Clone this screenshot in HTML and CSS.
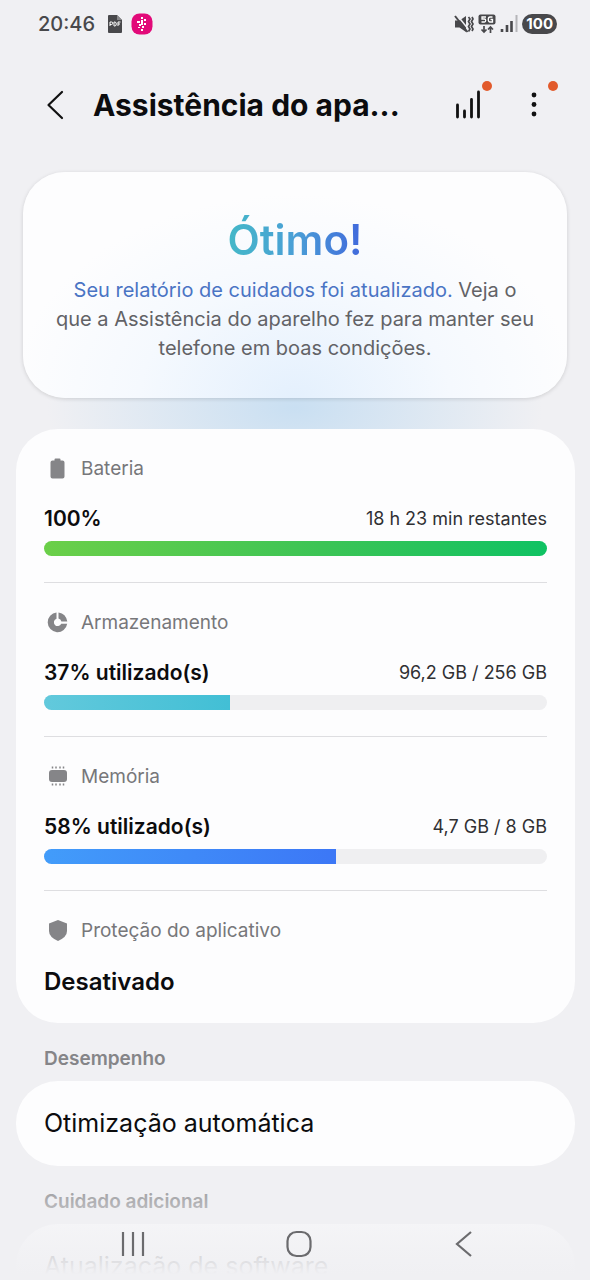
FILE: index.html
```html
<!DOCTYPE html>
<html lang="pt-BR">
<head>
<meta charset="utf-8">
<meta name="viewport" content="width=device-width, initial-scale=1">
<title>Assistência do aparelho</title>
<link rel="stylesheet" href="styles.css">
</head>
<body>
<div class="app">
  <div class="status">
    <div class="status-group">
      <span class="clock">20:46</span>
      <svg width="16" height="20" viewBox="0 0 16 20" aria-hidden="true"><path d="M2 1h8l5 5v12q0 1-1 1H2q-1 0-1-1V2q0-1 1-1z" fill="#48484b"/><path d="M10 1v5h5z" fill="#88888b"/><path d="M3 12V8h1.500q1.300 0 1.300 1.200T4.500 10.500H3M7 8v4h.7q1.600 0 1.600-2T7.700 8zM11 12V8h2.500M11 10h2" fill="none" stroke="#fff" stroke-width="1"/></svg>
      <svg width="22" height="22" viewBox="0 0 22 22" aria-hidden="true"><rect x=".5" y=".5" width="21" height="21" rx="8" fill="#e20a79"/><path d="M10 4h2v2h-2zM13 6h2v2h-2zM6 8h3v2H6zM10 7h2v3h-2zM13 10h2v2h-2zM8 11h2v2H8zM10 10h2v2h-2zM7 14h2v1H7zM11 13h2v2h-2zM10 16h2v2h-2z" fill="#fff"/></svg>
    </div>
    <div class="status-group status-right">
      <svg width="20" height="20" viewBox="0 0 20 20" aria-hidden="true"><path d="M1 6.500h4.500L12 2v16l-6.500-4.500H1z" fill="#48484b"/><path d="M2.500 .5L15 16" stroke="#f0f0f3" stroke-width="1.500"/><path d="M1 2l12.500 16" stroke="#48484b" stroke-width="2"/><path d="M14.500 3l1.500 2-1.500 2.500L16 10l-1.500 2.500L16 15l-1.500 2.500M18 3l1 2-1.500 2.500L19 10l-1.500 2.500L19 15l-1 2" fill="none" stroke="#48484b" stroke-width="1.700"/></svg>
      <svg width="18" height="20" viewBox="0 0 18 20" aria-hidden="true"><rect x=".5" y=".5" width="17" height="10" rx="2" fill="#48484b"/><path d="M8 3H4v2h2.500q1.200 0 1.200 1.500T6.500 8H3.500M14.500 3H12q-1.700 0-1.700 2.500T12 8h2.500V5.500H12.500" fill="none" stroke="#fff" stroke-width="1.300"/><path d="M6 12v6M3.500 15.500L6 18l2.500-2.500M12.500 19v-6M10 15.500l2.500-2.500 2.500 2.500" fill="none" stroke="#48484b" stroke-width="1.700"/></svg>
      <svg width="18" height="20" viewBox="0 0 18 20" aria-hidden="true"><path d="M2 15v3M7 11v7M11.500 7v11" stroke="#48484b" stroke-width="2.600"/><path d="M16.500 1v17" stroke="#b5b5b8" stroke-width="2"/></svg>
      <span class="battery-pill">100</span>
    </div>
  </div>

  <header class="header">
    <button class="icon-btn back" aria-label="Voltar"><svg width="20" height="32" viewBox="0 0 20 32"><path d="M17 3L3.500 16 17 29" fill="none" stroke="#111" stroke-width="2.200" stroke-linecap="round" stroke-linejoin="round"/></svg></button>
    <h1 class="title">Assistência do apa...</h1>
    <button class="icon-btn" aria-label="Relatório de cuidados"><svg width="28" height="30" viewBox="0 0 28 30"><path d="M3.500 15v12M10.500 21v6M17.500 9.500V27M24.500 2v25" fill="none" stroke="#111" stroke-width="2.800" stroke-linecap="round"/></svg><span class="dot"></span></button>
    <button class="icon-btn more" aria-label="Mais opções"><svg width="8" height="28" viewBox="0 0 8 28"><g fill="#111"><circle cx="4" cy="4" r="2.400"/><circle cx="4" cy="13.500" r="2.400"/><circle cx="4" cy="23" r="2.400"/></g></svg><span class="dot"></span></button>
  </header>

  <main>
    <div class="hero-area">
      <section class="hero">
        <h2 class="hero-title">Ótimo!</h2>
        <p class="hero-text"><a class="hero-link" href="#">Seu relatório de cuidados foi atualizado.</a> Veja o que a Assistência do aparelho fez para manter seu telefone em boas condições.</p>
      </section>
    </div>

    <section class="card">
      <div class="row">
        <div class="row-head"><svg width="28" height="24" viewBox="0 0 28 24" aria-hidden="true"><path d="M10.500 2.500q0-1 1-1h4q1 0 1 1V3.500h2q2 0 2 2v14q0 2-2 2h-10q-2 0-2-2v-14q0-2 2-2h2z" fill="#858588"/></svg><span id="l1">Bateria</span></div>
        <div class="row-values"><strong>100%</strong><span class="detail">18 h 23 min restantes</span></div>
        <progress class="bar green" aria-labelledby="l1" max="100" value="100"></progress>
      </div>
      <div class="row">
        <div class="row-head"><svg width="28" height="24" viewBox="0 0 28 24" aria-hidden="true"><path d="M12.500 1.600A9.800 9.800 0 1 0 23.200 12.800H17.200A3.800 3.800 0 1 1 12.500 7.700z" fill="#858588"/><path d="M14.500 1.500v6q2.300.6 2.900 3H23.300Q22 2.700 14.500 1.500z" fill="#858588"/></svg><span id="l2">Armazenamento</span></div>
        <div class="row-values"><strong>37% utilizado(s)</strong><span class="detail">96,2 GB / 256 GB</span></div>
        <progress class="bar teal" aria-labelledby="l2" max="100" value="37"></progress>
      </div>
      <div class="row">
        <div class="row-head"><svg width="28" height="24" viewBox="0 0 28 24" aria-hidden="true"><rect x="5" y="5" width="18" height="12" rx="3" fill="#858588"/><path d="M8.500 1.500v2M12 1.500v2M16 1.500v2M19.500 1.500v2M8.500 18.500v2M12 18.500v2M16 18.500v2M19.500 18.500v2" stroke="#858588" stroke-width="1.500"/></svg><span id="l3">Memória</span></div>
        <div class="row-values"><strong>58% utilizado(s)</strong><span class="detail">4,7 GB / 8 GB</span></div>
        <progress class="bar blue" aria-labelledby="l3" max="100" value="58"></progress>
      </div>
      <div class="row">
        <div class="row-head"><svg width="28" height="24" viewBox="0 0 28 24" aria-hidden="true"><path d="M14 1l9 3.500v7.500q0 6-9 10-9-4-9-10V4.500z" fill="#858588"/></svg><span>Proteção do aplicativo</span></div>
        <div class="row-values"><strong class="state">Desativado</strong></div>
      </div>
    </section>

    <h3 class="section-label">Desempenho</h3>
    <a class="card link-card" href="#">Otimização automática</a>
    <h3 class="section-label">Cuidado adicional</h3>
    <a class="card link-card" href="#">Atualização de software</a>
  </main>

  <nav class="navbar" aria-label="Navegação do sistema">
    <button class="icon-btn" aria-label="Recentes"><svg width="26" height="28" viewBox="0 0 26 28"><path d="M3 2v24M13 2v24M23 2v24" stroke="#6b6b6e" stroke-width="2.200"/></svg></button>
    <button class="icon-btn" aria-label="Início"><svg width="28" height="30" viewBox="0 0 28 30"><rect x="2.500" y="3" width="23" height="24" rx="9" fill="none" stroke="#6b6b6e" stroke-width="2.200"/></svg></button>
    <button class="icon-btn" aria-label="Voltar"><svg width="20" height="30" viewBox="0 0 20 30"><path d="M17 3L3 15l14 12" fill="none" stroke="#6b6b6e" stroke-width="2.200"/></svg></button>
  </nav>
</div>
</body>
</html>
```

FILE: styles.css
```css
* { box-sizing: border-box; }
body {
  margin: 0;
  background: #f0f0f3;
  color: #0c0c0e;
  font-family: Inter, Roboto, sans-serif;
}
h1, h2, h3, p { margin: 0; }
a { color: inherit; text-decoration: none; }
svg { display: block; }
.app { position: relative; height: 100vh; overflow: hidden; }

.status {
  display: flex;
  align-items: center;
  justify-content: space-between;
  height: 48px;
  padding: 0 33px 0 38px;
}
.status-group { display: flex; align-items: center; gap: 8px; }
.status-right { gap: 4px; }
.clock { margin-right: 4px; font-size: 20px; font-weight: 500; color: #48484b; }
.battery-pill {
  padding: 0 4px;
  border-radius: 10px;
  background: #48484b;
  color: #fff;
  font-size: 15px;
  font-weight: 700;
  line-height: 20px;
}

.header {
  display: flex;
  align-items: center;
  height: 114px;
  padding: 0 32px 0 40px;
}
.icon-btn {
  position: relative;
  display: grid;
  place-items: center;
  width: 48px;
  height: 48px;
  padding: 0;
  border: 0;
  background: none;
}
.back { width: 30px; }
.more { margin-left: 18px; }
.title {
  flex: 1;
  margin-left: 23px;
  overflow: hidden;
  white-space: nowrap;
  font-size: 30px;
  font-weight: 700;
  line-height: 44px;
}
.dot {
  position: absolute;
  top: 0;
  right: 0;
  width: 10px;
  height: 10px;
  border-radius: 50%;
  background: #e25a2b;
}

.hero-area {
  padding: 10px 23px 31px;
  background: radial-gradient(ellipse 42% 44% at 50% 92%, #c9dff2, #f0f0f300);
}
.hero {
  padding: 40px 31px 35px;
  border-radius: 42px;
  background: radial-gradient(ellipse 52% 90% at 50% 100%, #e4f0fd, #f5f9fe 55%, #fdfdfe);
  box-shadow: 0 1px 4px #00000024;
  text-align: center;
}
.hero-title {
  width: fit-content;
  margin: 0 auto 8px;
  background: linear-gradient(90deg, #44b8c8, #4a9fd6 50%, #4169dc);
  background-clip: text;
  -webkit-background-clip: text;
  color: transparent;
  font-size: 42px;
  font-weight: 600;
  line-height: 56px;
}
.hero-text { color: #626266; font-size: 20px; line-height: 29px; }
.hero-link { color: #4a74c4; }

.card { margin: 0 15px 0 16px; border-radius: 42px; background: #fdfdfe; }
.row { margin: 0 28px; padding: 28px 0 26px; border-bottom: 1px solid #dedee1; }
.row:last-child { border-bottom: 0; }
.row-head {
  display: flex;
  align-items: center;
  gap: 9px;
  color: #77777a;
  font-size: 19px;
  line-height: 24px;
}
.row-values {
  display: flex;
  align-items: center;
  justify-content: space-between;
  margin-top: 24px;
  font-size: 21px;
  line-height: 28px;
}
.row-values strong { font-weight: 600; }
.row-values .state { font-size: 24px; line-height: 30px; }
.detail { color: #303033; font-size: 18px; }
.bar {
  display: block;
  width: 100%;
  height: 15px;
  margin-top: 8px;
  border: 0;
  border-radius: 8px;
  overflow: hidden;
  appearance: none;
  background: #efeff1;
}
.bar::-webkit-progress-bar { background: #efeff1; }
.green::-webkit-progress-value { background: linear-gradient(90deg, #6bcf49, #3cc455 55%, #0fc263); }
.teal::-webkit-progress-value { background: linear-gradient(90deg, #62c9dc, #42bfd5); }
.blue::-webkit-progress-value { background: linear-gradient(90deg, #429cfa, #3c77f6); }

.section-label {
  padding: 24px 44px 10px;
  color: #858588;
  font-size: 19px;
  font-weight: 600;
  line-height: 24px;
}
.link-card { display: block; padding: 26px 28px; font-size: 25px; line-height: 33px; }

.navbar {
  position: absolute;
  inset: auto 0 0;
  display: flex;
  align-items: flex-end;
  justify-content: space-between;
  height: 110px;
  padding: 0 102px 12px 109px;
  background: linear-gradient(#f0f0f300, #f0f0f3a0 45%, #f0f0f3e0 75%, #f0f0f3 95%);
}
```
